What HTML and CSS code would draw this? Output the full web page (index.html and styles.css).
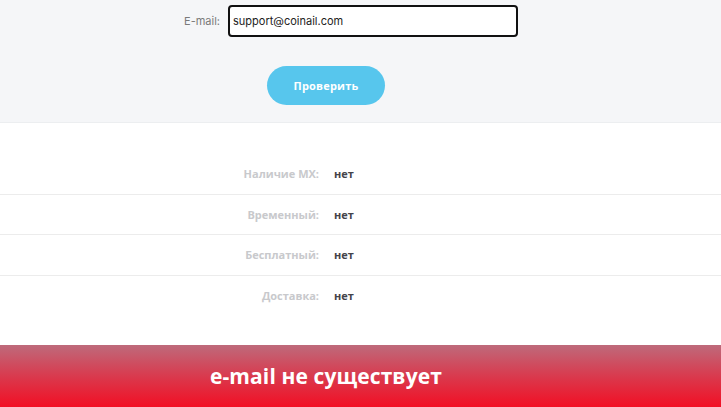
FILE: index.html
```html
<!DOCTYPE html>
<html lang="ru">
<head>
<meta charset="utf-8">
<link rel="stylesheet" href="styles.css">
</head>
<body>
<section class="form">
  <div class="field">
    <label class="label" for="email">E-mail:</label>
    <input id="email" class="input" type="text" value="support@coinail.com">
  </div>
  <div class="actions">
    <button class="btn">Проверить</button>
  </div>
</section>
<section class="results">
  <div class="row"><span class="key">Наличие MX:</span><span class="val">нет</span></div>
  <div class="row"><span class="key">Временный:</span><span class="val">нет</span></div>
  <div class="row"><span class="key">Бесплатный:</span><span class="val">нет</span></div>
  <div class="row last"><span class="key">Доставка:</span><span class="val">нет</span></div>
</section>
<section class="status">
  <div class="status-text">e-mail не существует</div>
</section>
</body>
</html>
```
FILE: styles.css
```css
* { box-sizing: border-box; }
html, body { margin: 0; padding: 0; }
body {
  width: 721px;
  height: 407px;
  overflow: hidden;
  font-family: "Open Sans", "Noto Sans", sans-serif;
  background: #fff;
}
.form {
  background: #f5f6f8;
  height: 123px;
  padding-top: 5px;
  border-bottom: 1px solid #eceef0;
}
.field {
  display: flex;
  align-items: center;
  height: 32px;
}
.label {
  width: 228px;
  text-align: right;
  padding-right: 8px;
  font-size: 11px;
  color: #7a7a7a;
  font-family: "Inter", sans-serif;
}
.input {
  width: 290px;
  height: 32px;
  border: 2px solid #111;
  border-radius: 4px;
  background: #fff;
  padding: 0 0 0 3px;
  font-family: "Inter", sans-serif;
  font-size: 11px;
  color: #222;
  outline: none;
}
.actions {
  padding-top: 29px;
  padding-left: 267px;
}
.btn {
  width: 118px;
  height: 39px;
  border: none;
  border-radius: 20px;
  background: #57c6ed;
  color: #fff;
  font-family: "Open Sans", sans-serif;
  font-weight: 700;
  font-size: 11px;
  letter-spacing: 0.2px;
  padding: 0;
}
.results {
  padding-top: 31px;
  height: 222px;
}
.row {
  display: flex;
  align-items: center;
  height: 40.5px;
  border-bottom: 1px solid #ececec;
  font-weight: 700;
  font-size: 11px;
}
.row.last { border-bottom: none; }
.key {
  width: 319px;
  text-align: right;
  color: #c8c9cc;
}
.val {
  padding-left: 15px;
  color: #44444a;
  font-weight: 700;
}
.status {
  height: 62px;
  background: linear-gradient(to bottom, #be6a7b 0%, #d93a4e 50%, #f20f24 100%);
  display: flex;
  align-items: center;
  padding-left: 210px;
}
.status-text {
  color: #fff;
  font-weight: 700;
  font-size: 21px;
  letter-spacing: 0.1px;
}
```
